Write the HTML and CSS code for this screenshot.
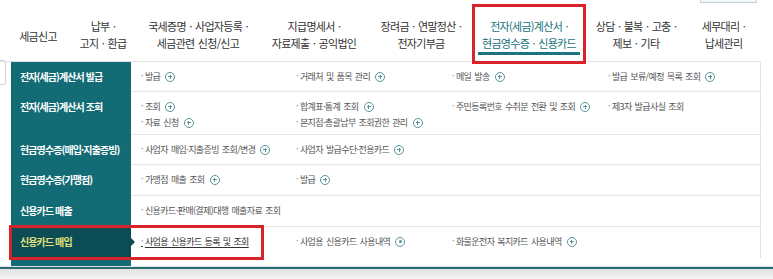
FILE: index.html
```html
<!DOCTYPE html>
<html lang="ko">
<head>
<meta charset="utf-8">
<title>전자(세금)계산서 · 현금영수증 · 신용카드</title>
<link rel="stylesheet" href="styles.css">
</head>
<body>
<div class="page">
  <div class="topbar"><span class="stub-top"></span></div>
  <nav class="gnb">
    <a class="gnb-item w1 single"><span>세금신고</span></a>
    <a class="gnb-item w2"><span>납부 ·<br>고지 · 환급</span></a>
    <a class="gnb-item w3"><span>국세증명 · 사업자등록 ·<br>세금관련 신청/신고</span></a>
    <a class="gnb-item w4"><span>지급명세서 ·<br>자료제출 · 공익법인</span></a>
    <a class="gnb-item w5"><span>장려금 · 연말정산 ·<br>전자기부금</span></a>
    <a class="gnb-item w6 active"><span>전자(세금)계산서 ·<br>현금영수증 · 신용카드</span></a>
    <a class="gnb-item w7"><span>상담 · 불복 · 고충 ·<br>제보 · 기타</span></a>
    <a class="gnb-item w8"><span>세무대리 ·<br>납세관리</span></a>
  </nav>
  <div class="panel">
    <div class="gutter"><span class="stub-left"></span></div>
    <div class="menu">
      <div class="row h30">
        <div class="label">전자(세금)계산서 발급</div>
        <ul class="links">
          <li>발급<i class="plus"></i></li>
          <li>거래처 및 품목 관리<i class="plus"></i></li>
          <li>메일 발송<i class="plus"></i></li>
          <li>발급 보류/예정 목록 조회<i class="plus"></i></li>
        </ul>
      </div>
      <div class="row h43">
        <div class="label">전자(세금)계산서 조회</div>
        <ul class="links">
          <li>조회<i class="plus"></i></li>
          <li>합계표·통계 조회<i class="plus"></i></li>
          <li>주민등록번호 수취분 전환 및 조회<i class="plus"></i></li>
          <li>제3자 발급사실 조회</li>
          <li>자료 신청<i class="plus"></i></li>
          <li>본지점·총괄납부 조회권한 관리<i class="plus"></i></li>
        </ul>
      </div>
      <div class="row h30">
        <div class="label">현금영수증(매입·지출증빙)</div>
        <ul class="links">
          <li>사업자 매입·지출증빙 조회/변경<i class="plus"></i></li>
          <li>사업자 발급수단·전용카드<i class="plus"></i></li>
        </ul>
      </div>
      <div class="row h31">
        <div class="label">현금영수증(가맹점)</div>
        <ul class="links">
          <li>가맹점 매출 조회<i class="plus"></i></li>
          <li>발급<i class="plus"></i></li>
        </ul>
      </div>
      <div class="row h31">
        <div class="label">신용카드 매출</div>
        <ul class="links">
          <li>신용카드·판매(결제)대행 매출자료 조회</li>
        </ul>
      </div>
      <div class="row h31 current">
        <div class="label">신용카드 매입</div>
        <ul class="links last">
          <li class="on">사업용 신용카드 등록 및 조회</li>
          <li>사업용 신용카드 사용내역<i class="plus dot"></i></li>
          <li>화물운전자 복지카드 사용내역<i class="plus"></i></li>
        </ul>
      </div>
      <div class="menu-foot"></div>
    </div>
  </div>
  <div class="bottom-line"></div>
  <div class="bottom-shadow"></div>
  <div class="mark mark-nav"></div>
  <div class="mark mark-row"></div>
</div>
</body>
</html>
```
FILE: styles.css
```css
* { box-sizing: border-box; }
html, body { margin: 0; padding: 0; background: #fff; }
body { font-family: "Noto Sans CJK KR", "Noto Sans", sans-serif; }

.page {
  position: relative;
  width: 773px;
  height: 279px;
  overflow: hidden;
  background: #fff;
}

.topbar {
  height: 3px;
  display: flex;
  padding-left: 700px;
}
.stub-top {
  width: 57px;
  height: 3px;
  border: 1px solid #bfd3d8;
  border-top: none;
  background: #f3f8f9;
}

.gnb {
  width: 761px;
  height: 59px;
  padding-top: 5px;
  padding-left: 8px;
  display: flex;
  border-bottom: 1px solid #e2e2e2;
}
.gnb-item {
  display: flex;
  align-items: center;
  justify-content: center;
  text-align: center;
  font-size: 11px;
  line-height: 17px;
  letter-spacing: -0.7px;
  word-spacing: 1px;
  color: #333;
  white-space: nowrap;
}
.gnb-item.single span { padding-top: 3px; }
.gnb-item.active span {
  color: #17707b;
  border-bottom: 3px solid #1d7480;
  padding: 0 4px;
  margin-top: 3px;
}
.w1 { width: 60px; }
.w2 { width: 70px; }
.w3 { width: 120px; }
.w4 { width: 112px; }
.w5 { width: 102px; }
.w6 { width: 114px; }
.w7 { width: 100px; }
.w8 { width: 75px; }

.panel {
  display: flex;
}
.gutter {
  width: 11px;
  flex: none;
}
.stub-left {
  display: block;
  width: 6px;
  height: 25px;
  margin-top: -2px;
  border: 1px solid #d3d6d7;
  border-left: none;
  border-radius: 0 3px 3px 0;
}
.menu {
  width: 750px;
}

.row {
  display: grid;
  grid-template-columns: 120px 1fr;
}
.h30 { height: 30px; }
.h31 { height: 31px; }
.h43 { height: 43px; }

.label {
  background: #136c75;
  color: #fff;
  font-weight: 700;
  font-size: 10px;
  letter-spacing: -0.9px;
  line-height: 13px;
  padding: 8px 0 0 9px;
  white-space: nowrap;
}
.row.current .label {
  position: relative;
  background: #0c4d55;
  color: #e1e27c;
}
.row.current .label::after {
  content: "";
  position: absolute;
  right: -4px;
  top: 11px;
  border-left: 4px solid #0c4d55;
  border-top: 4px solid transparent;
  border-bottom: 4px solid transparent;
}

.links {
  list-style: none;
  margin: 0;
  padding: 8px 0 0 10px;
  display: grid;
  grid-template-columns: 155px 156px 156px 1fr;
  row-gap: 3px;
  align-content: start;
  border-bottom: 1px solid #e6e6e6;
  border-right: 1px solid #e3e3e3;
}
.links.last { border-bottom: none; }
.links li {
  display: flex;
  align-items: center;
  height: 13px;
  font-size: 9px;
  letter-spacing: -0.6px;
  word-spacing: 1px;
  color: #555;
  white-space: nowrap;
}
.links li::before {
  content: "·";
  color: #888;
  margin-right: 2px;
  position: relative;
  top: -1px;
}
.links li.on {
  color: #333;
  text-decoration: underline;
  text-underline-offset: 2px;
}

.plus {
  position: relative;
  display: inline-block;
  flex: none;
  width: 10px;
  height: 10px;
  margin-left: 5px;
  border: 1px solid #5a939b;
  border-radius: 50%;
}
.plus::before,
.plus::after {
  content: "";
  position: absolute;
  background: #5a939b;
}
.plus::before { left: 2px; top: 3.5px; width: 4px; height: 1px; }
.plus::after { left: 3.5px; top: 2px; width: 1px; height: 4px; }
.plus.dot::before { left: 2.5px; top: 2.5px; width: 3px; height: 3px; border-radius: 50%; }
.plus.dot::after { display: none; }

.menu-foot {
  width: 120px;
  height: 8px;
  background: #136c75;
}

.bottom-line {
  height: 3px;
  border-top: 1px solid #d3e6e8;
  background: #2e6a70;
}
.bottom-shadow {
  height: 10px;
  background: linear-gradient(#e1e3e3, #f5f5f5);
}

.mark {
  position: absolute;
  border: 3px solid #d8232a;
}
.mark-nav {
  left: 472px;
  top: 4px;
  width: 114px;
  height: 60px;
}
.mark-row {
  left: 9px;
  top: 225px;
  width: 255px;
  height: 35px;
}
```
